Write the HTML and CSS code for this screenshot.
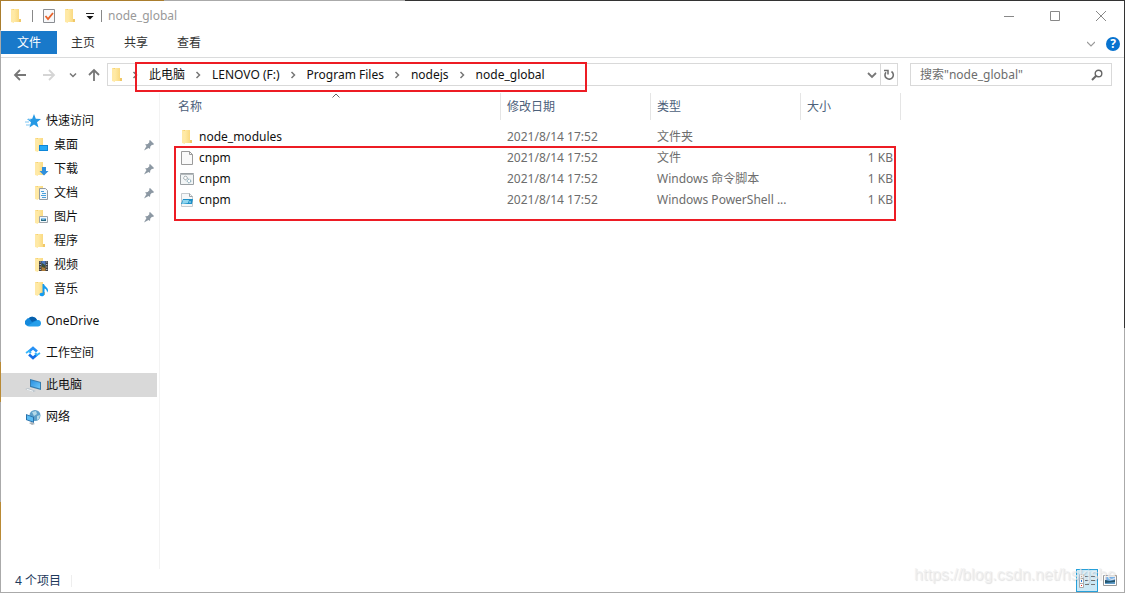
FILE: index.html
```html
<!DOCTYPE html>
<html lang="zh-CN">
<head>
<meta charset="utf-8">
<title>node_global</title>
<link rel="stylesheet" href="styles.css">
</head>
<body>
<svg class="defs" aria-hidden="true">
  <defs>
    <linearGradient id="gold" x1="0" x2="1"><stop offset="0" stop-color="#ffeaa5"/><stop offset="1" stop-color="#f8d374"/></linearGradient>
    <linearGradient id="screen" x1="0" y1="0" x2="1" y2="1"><stop offset="0" stop-color="#2a8fe0"/><stop offset="1" stop-color="#6cc8fb"/></linearGradient>
    <symbol id="folder" viewBox="0 0 16 16"><path d="M2 1h8v10h2v3H2z" fill="#f5cd69"/><path d="M2 1l3 1v13l-3-1z" fill="#ffe9a6"/><path d="M5 1h5v10h2v3H5z" fill="url(#gold)"/><path d="M10 11h2v3h-2z" fill="#f0c868"/></symbol>
    <symbol id="pin" viewBox="0 0 12 12"><path d="M7 1l4 4-1 1-1-.3L7.300 7.500 7 10 5.500 9 1 11.500 3.500 7 2 5.500 4.700 5 6.600 3 6 2z" fill="#8c98a3"/></symbol>
    <symbol id="crumb" viewBox="0 0 6 8"><path d="M1 1l3 3-3 3" fill="none" stroke="#777" stroke-width="1.500"/></symbol>
  </defs>
</svg>
<div class="window">
  <header class="titlebar">
    <svg class="icon"><use href="#folder"/></svg>
    <span class="rule"></span>
    <button class="quick" aria-label="属性"><svg class="icon" viewBox="0 0 16 16"><path d="M2.500 1.500h11v13h-11z" fill="#f7f8fa" stroke="#8a8d92"/><path d="M4.500 8l2.500 3 5-6" fill="none" stroke="#e8622a" stroke-width="1.800"/></svg></button>
    <button class="quick" aria-label="新建文件夹"><svg class="icon"><use href="#folder"/></svg></button>
    <button class="quick" aria-label="自定义快速访问工具栏"><svg class="more" viewBox="0 0 8 8"><path d="M0 1.500h8" stroke="#222" /><path d="M0.500 4h7L4 7.500z" fill="#111"/></svg></button>
    <span class="rule"></span>
    <h1 class="title">node_global</h1>
    <div class="controls">
      <button class="control" aria-label="最小化"><svg class="glyph" viewBox="0 0 10 10"><path d="M0 5.500h10"/></svg></button>
      <button class="control" aria-label="最大化"><svg class="glyph" viewBox="0 0 10 10"><path d="M.5.5h9v9h-9z"/></svg></button>
      <button class="control" aria-label="关闭"><svg class="glyph" viewBox="0 0 10 10"><path d="M0 0l10 10M10 0L0 10"/></svg></button>
    </div>
  </header>
  <nav class="tabs" aria-label="功能区">
    <button class="tab tab-file">文件</button>
    <button class="tab">主页</button>
    <button class="tab">共享</button>
    <button class="tab">查看</button>
    <div class="ribbon-tools">
      <button class="quick" aria-label="展开功能区"><svg class="expand" viewBox="0 0 8 8"><path d="M0 2l4 4 4-4" fill="none" stroke="#999" stroke-width="1.200"/></svg></button>
      <button class="help" aria-label="帮助">?</button>
    </div>
  </nav>
  <div class="toolbar">
    <div class="history">
      <button class="quick" aria-label="后退"><svg class="arrow" viewBox="0 0 14 14"><path d="M13 7H2M7 2L2 7l5 5" stroke="#777"/></svg></button>
      <button class="quick" aria-label="前进"><svg class="arrow" viewBox="0 0 14 14"><path d="M1 7h11M7 2l5 5-5 5" stroke="#d5d5d5"/></svg></button>
      <button class="quick" aria-label="最近浏览的位置"><svg class="recent" viewBox="0 0 8 8"><path d="M1 2.500l3 3 3-3" fill="none" stroke="#777" stroke-width="1.500"/></svg></button>
      <button class="quick" aria-label="上移"><svg class="arrow" viewBox="0 0 14 14"><path d="M7 13V2M2 7l5-5 5 5" stroke="#777"/></svg></button>
    </div>
    <div class="address">
      <svg class="icon"><use href="#folder"/></svg>
      <nav class="crumbs" aria-label="路径">
        <svg class="crumb"><use href="#crumb"/></svg>
        <a href="#">此电脑</a>
        <svg class="crumb"><use href="#crumb"/></svg>
        <a href="#">LENOVO (F:)</a>
        <svg class="crumb"><use href="#crumb"/></svg>
        <a href="#">Program Files</a>
        <svg class="crumb"><use href="#crumb"/></svg>
        <a href="#">nodejs</a>
        <svg class="crumb"><use href="#crumb"/></svg>
        <a href="#">node_global</a>
      </nav>
      <button class="quick drop" aria-label="以前的位置"><svg class="chevron" viewBox="0 0 10 10"><path d="M1 3l4 4 4-4" fill="none" stroke="#777" stroke-width="1.800"/></svg></button>
      <button class="refresh" aria-label="刷新"><svg class="reload" viewBox="0 0 12 12"><path d="M8.500 2.500A4.200 4.200 0 1 1 3 3.200" fill="none" stroke="#6f6f6f" stroke-width="1.600"/><path d="M1 1.500h4v4" fill="none" stroke="#6f6f6f" stroke-width="1.500"/></svg></button>
      <span class="mark mark-path"></span>
    </div>
    <form class="search">
      <input class="search-input" type="search" placeholder="搜索&quot;node_global&quot;" aria-label="搜索node_global">
      <button class="quick" type="button" aria-label="搜索"><svg class="lens" viewBox="0 0 12 12"><circle cx="7.500" cy="4.500" r="3.300" fill="none" stroke="#666" stroke-width="1.400"/><path d="M5 7L1 11" stroke="#666" stroke-width="2"/></svg></button>
    </form>
  </div>
  <div class="content">
    <nav class="sidebar" aria-label="导航窗格">
      <div class="group">
        <a class="place" href="#"><svg class="icon" viewBox="0 0 16 16"><path d="M9 1l1.800 4.700L16 6l-4 3.300 1.500 5.200L9 11.500l-4.500 3L6 9.300 2 6l5.200-.3z" fill="#2599e5"/><path d="M0 9h4M1 12h4M3 6l3 1" stroke="#7cc6f3"/></svg>快速访问</a>
        <a class="place child" href="#"><svg class="icon" viewBox="0 0 16 16"><use href="#folder"/><path d="M6 8h9v6H6z" fill="#0d86d8"/><path d="M7 9h7v4H7z" fill="#27a9f5"/></svg><span class="label">桌面</span><svg class="pin"><use href="#pin"/></svg></a>
        <a class="place child" href="#"><svg class="icon" viewBox="0 0 16 16"><use href="#folder"/><path d="M9 6h4v4h2.500L11 14.500 6.500 10H9z" fill="#2f8fdc"/></svg><span class="label">下载</span><svg class="pin"><use href="#pin"/></svg></a>
        <a class="place child" href="#"><svg class="icon" viewBox="0 0 16 16"><use href="#folder"/><path d="M6.500 3.500h6l2 2v9h-8z" fill="#f4f8fb" stroke="#939ba2"/><path d="M8 6.500h3M9 8.500h4M8 10.500h5M9 12.500h4" stroke="#4ba1dc"/></svg><span class="label">文档</span><svg class="pin"><use href="#pin"/></svg></a>
        <a class="place child" href="#"><svg class="icon" viewBox="0 0 16 16"><use href="#folder"/><path d="M6.500 7.500h8v6h-8z" fill="#f2f8fc" stroke="#9ca4aa"/><path d="M8 9h5v2H8z" fill="#8bc4ed"/><path d="M8 10l2 1 3-1v2H8z" fill="#276981"/></svg><span class="label">图片</span><svg class="pin"><use href="#pin"/></svg></a>
        <a class="place child" href="#"><svg class="icon"><use href="#folder"/></svg><span class="label">程序</span></a>
        <a class="place child" href="#"><svg class="icon" viewBox="0 0 16 16"><use href="#folder"/><path d="M6 4h9v10H6z" fill="#3c3d42"/><path d="M8.500 4h4v5h-4z" fill="#4e79bf"/><path d="M8.500 9h4v5h-4z" fill="#b07d37"/><path d="M9 6l3 2v3l-3-1z" fill="#3c5038"/><path d="M7.200 4.500V14M13.800 4.500V14" stroke="#e3e3e3" stroke-dasharray="1 1.500"/></svg><span class="label">视频</span></a>
        <a class="place child" href="#"><svg class="icon" viewBox="0 0 16 16"><use href="#folder"/><path d="M9.500 3H11c.5 2.500 4.500 3.500 4 7l-1 1.500c.2-2-1-3.500-2.500-4V13c0 3-5 3-5 .6C6.500 12 8.500 11.300 9.500 12z" fill="#159bf0"/></svg><span class="label">音乐</span></a>
      </div>
      <a class="place" href="#"><svg class="icon" viewBox="0 0 16 16"><path d="M1 12a3 3 0 0 1 0-5 4 4 0 0 1 3-2 5 5 0 0 1 8 2 3.500 3.500 0 0 1 2 6H3a3 3 0 0 1-2-1z" fill="#1489dc"/><path d="M4 5a5 5 0 0 1 8 2L7 9z" fill="#075fac"/><path d="M2 13l7-4 4-2c2 0 3 1.500 3 3.500S14.500 13.500 13 13.500H4z" fill="#259eea"/></svg>OneDrive</a>
      <a class="place" href="#"><svg class="icon" viewBox="0 0 16 16"><path d="M4 6.500l4-3.500 4 3.500" fill="none" stroke="#2791f5" stroke-width="2.600"/><path d="M4 9.500l4 3.500 4-3.500" fill="none" stroke="#126fe8" stroke-width="2.600"/><path d="M1 8l3-2 2 2M15 8l-3 2-2-2" fill="none" stroke="#35b5fb" stroke-width="1.800"/></svg>工作空间</a>
      <a class="place selected" href="#" aria-current="page"><svg class="icon" viewBox="0 0 16 16"><path d="M5 2l11 3v8L5 10z" fill="#367bad"/><path d="M6 3.300l9 2.500v5.800L6 9.100z" fill="url(#screen)"/><path d="M0 12l3-1 8 3-3 1z" fill="#b9c4cc"/><path d="M2 12.300l6 2" stroke="#f3f5f6"/></svg>此电脑</a>
      <a class="place" href="#"><svg class="icon" viewBox="0 0 16 16"><circle cx="10" cy="6.500" r="5.500" fill="#5d9fc8"/><path d="M7 3l4-1 1 3-3 2zM12 7l3-1-1 4-2 1z" fill="#b5dae8"/><path d="M1 5l8 3v6L1 11z" fill="#2870aa"/><path d="M2 6.300l6 2.300v4L2 10.400z" fill="#5bbcf3"/><path d="M4 14l3-1 3 2-3 1z" fill="#a8b1b8"/></svg>网络</a>
    </nav>
    <main class="files">
      <table class="list">
        <colgroup><col class="col-name"><col class="col-mid"><col class="col-mid"><col class="col-size"></colgroup>
        <thead>
          <tr><th scope="col" aria-sort="ascending">名称<svg class="sort" viewBox="0 0 8 5"><path d="M.5 4.500L4 1l3.500 3.500" fill="none" stroke="#666"/></svg></th><th scope="col">修改日期</th><th scope="col">类型</th><th scope="col">大小</th></tr>
        </thead>
        <tbody>
          <tr><td><a class="file" href="#"><svg class="icon"><use href="#folder"/></svg>node_modules</a></td><td>2021/8/14 17:52</td><td>文件夹</td><td class="size"></td></tr>
          <tr><td><a class="file" href="#"><svg class="icon" viewBox="0 0 16 16"><path d="M1.500 1.500h8l3 3v10h-11z" fill="#fafafa" stroke="#9b9b9b"/><path d="M9.500 1.500v3h3" fill="none" stroke="#9b9b9b"/></svg>cnpm</a></td><td>2021/8/14 17:52</td><td>文件</td><td class="size">1 KB</td></tr>
          <tr><td><a class="file" href="#"><svg class="icon" viewBox="0 0 16 16"><path d="M.5 2.500h13v11H.5z" fill="#f2f5f6" stroke="#9aa0a4"/><path d="M0 3.500h14" stroke="#b5babd"/><circle cx="5.500" cy="7" r="1.800" fill="#fff" stroke="#87959b" stroke-dasharray="1.500 .6"/><circle cx="9" cy="10" r="1.800" fill="#fff" stroke="#6f98a8" stroke-dasharray="1.500 .6"/></svg>cnpm</a></td><td>2021/8/14 17:52</td><td>Windows 命令脚本</td><td class="size">1 KB</td></tr>
          <tr><td><a class="file" href="#"><svg class="icon" viewBox="0 0 16 16"><path d="M1.500 1.500h8l3 3v10h-11z" fill="#f5f7f8" stroke="#c4cace"/><path d="M9.500 1.500v3h3" fill="none" stroke="#9ca3a8"/><path d="M3 7h10l-1 5H1z" fill="#1c8fc7"/><path d="M3 8h6l-1 3-6 1z" fill="#8fd5ee"/><path d="M9 10h2" stroke="#bfe6f5"/></svg>cnpm</a></td><td>2021/8/14 17:52</td><td>Windows PowerShell ...</td><td class="size">1 KB</td></tr>
        </tbody>
      </table>
      <span class="mark mark-files"></span>
    </main>
  </div>
  <footer class="status">
    <span class="count">4 个项目</span>
    <div class="views">
      <button class="view active" aria-label="详细信息"><svg class="view-details" viewBox="0 0 18 16"><path d="M1.500 1.500h4v13h-4z" fill="#fff" stroke="#aaa"/><path d="M1 5.500h5M1 10.500h5" stroke="#aaa"/><path d="M3 3h1v1H3z" fill="#555"/><path d="M3 7h1v2H3z" fill="#2b7ce0"/><path d="M3 12h1v1H3z" fill="#e22"/><path d="M7 3.500h4M13 3.500h4M7 7.500h4M13 7.500h4M7 11.500h4M13 11.500h4" stroke="#777"/></svg></button>
      <button class="view" aria-label="大图标"><svg class="view-large" viewBox="0 0 14 12"><path d="M.5.5h13v10H.5z" fill="#fff" stroke="#999"/><path d="M2 2h10v4H2z" fill="#7eb8ef"/><path d="M2 5l5 1 5-1v4H2z" fill="#24566e"/><path d="M2 8l10-1v2H2z" fill="#5e9bc8"/></svg></button>
    </div>
    <span class="watermark">https://blog.csdn.net/hskjshe</span>
  </footer>
</div>
</body>
</html>
```
FILE: styles.css
```css
* { box-sizing: border-box; }

body {
  margin: 0;
  font: 12px/20px "Noto Sans", "Noto Sans CJK SC", sans-serif;
  color: #111;
  background: #fff;
}

a { color: inherit; text-decoration: none; }

button {
  margin: 0;
  padding: 0;
  border: 0;
  background: none;
  font: inherit;
  color: inherit;
}

svg { display: block; flex: none; }

.defs { position: absolute; width: 0; height: 0; }
.icon { width: 16px; height: 16px; }
.quick { display: flex; align-items: center; justify-content: center; }

.window {
  display: flex;
  flex-direction: column;
  min-height: 100vh;
  padding: 1px;
  background:
    linear-gradient(to right, #aa7d2d 164px, #aaa 164px 405px, #333 405px) top / 100% 1px no-repeat,
    linear-gradient(#aaa, #aaa) bottom / 100% 1px no-repeat,
    linear-gradient(#aa7d2d 30px, #aaa 30px 362px, #b98a35 362px 402px, #aaa 402px 502px, #b98a35 502px 540px, #aaa 540px) left / 1px 100% no-repeat,
    linear-gradient(#333 328px, #aaa 328px) right / 1px 100% no-repeat,
    #fff;
}

.titlebar {
  display: flex;
  align-items: center;
  height: 30px;
  padding-left: 8px;
  gap: 6px;
}

.titlebar .rule { width: 1px; height: 12px; margin: 0 2px 0 1px; background: #888; }
.titlebar .rule + .title { margin-left: -2px; }
.more { width: 8px; height: 8px; margin-left: 1px; }
.title { margin: 0; font-size: 12px; font-weight: 400; color: #999; }

.controls { display: flex; align-self: stretch; margin-left: auto; }
.control { display: flex; align-items: center; justify-content: center; width: 46px; }
.glyph { width: 10px; height: 10px; fill: none; stroke: #888; }

.tabs {
  display: flex;
  align-items: flex-start;
  gap: 1px;
  height: 27px;
  border-bottom: 1px solid #dadbdc;
}

.tab { height: 23px; padding: 0 14px; color: #333; }
.tab-file { width: 56px; margin-right: -1px; background: #1979ca; color: #fff; }
.ribbon-tools { display: flex; align-items: center; gap: 11px; height: 26px; margin-left: auto; padding-right: 4px; }
.expand { width: 8px; height: 8px; }
.help { width: 14px; height: 14px; border-radius: 50%; background: #0873cf; color: #fff; font-weight: 700; line-height: 14px; }

.toolbar { display: flex; height: 35px; padding: 5px 12px 7px 0; }
.history { display: flex; align-items: center; width: 106px; padding-left: 12px; gap: 15px; }
.history .quick:nth-child(3) { margin: 0 -5px 0 -2px; }
.arrow { width: 14px; height: 14px; fill: none; stroke-width: 1.8; }
.recent { width: 8px; height: 8px; }

.address {
  position: relative;
  display: flex;
  flex: 1;
  align-items: center;
  border: 1px solid #d9d9d9;
  padding-left: 2px;
}

.crumbs { display: flex; flex: 1; align-items: center; gap: 10px; padding-left: 6px; }
.crumb { width: 7px; height: 8px; }
.drop { width: 16px; }
.chevron { width: 10px; height: 10px; }
.refresh { display: flex; align-items: center; justify-content: center; align-self: stretch; width: 17px; border-left: 1px solid #d9d9d9; }
.reload { width: 12px; height: 12px; }

.search {
  display: flex;
  align-items: center;
  width: 202px;
  margin-left: 12px;
  padding: 0 8px 0 9px;
  border: 1px solid #d9d9d9;
}

.search-input { flex: 1; min-width: 0; padding: 0; border: 0; outline: 0; background: none; font: inherit; }
.search-input::placeholder { color: #6d6d6d; opacity: 1; }
.lens { width: 12px; height: 12px; }

.content { display: flex; flex: 1; }

.sidebar {
  display: flex;
  flex-direction: column;
  gap: 8px;
  width: 159px;
  padding: 16px 2px 0 0;
  border-right: 1px solid #f3f3f3;
}

.place { display: flex; align-items: center; gap: 5px; height: 24px; padding-left: 24px; }
.child { padding: 0 2px 0 32px; }
.label { flex: 1; }
.pin { width: 12px; height: 12px; }
.selected { background: #d9d9d9; }

.files { position: relative; flex: 1; padding-left: 11px; }
.list { width: 730px; table-layout: fixed; border-collapse: collapse; }
.col-name { width: 330px; }
.col-mid { width: 150px; }
.col-size { width: 100px; }

.list th {
  position: relative;
  height: 27px;
  padding: 0 6px;
  box-shadow: inset -1px 0 #e5e5e5;
  font-weight: 400;
  text-align: left;
  color: #4c607a;
}

.list th:first-child { padding-left: 7px; }
.list tbody::before { content: ""; display: block; height: 6px; }
.list td { height: 21px; padding: 0 6px; line-height: 21px; color: #6d6d6d; white-space: nowrap; }
.list .size { padding-right: 8px; text-align: right; }
.sort { position: absolute; top: 0; left: calc(50% - 4px); width: 8px; height: 5px; }
.file { display: flex; align-items: center; gap: 3px; padding-left: 3px; color: #111; }

.mark { position: absolute; border: 2px solid #ed1c24; pointer-events: none; }
.mark-path { top: -2px; left: 27px; width: 452px; height: 30px; }
.mark-files { top: 53px; left: 14px; width: 722px; height: 75px; }

.status { position: relative; display: flex; align-items: center; justify-content: space-between; height: 23px; padding: 0 3px 0 14px; }
.count { padding-right: 10px; border-right: 1px solid #eee; line-height: 12px; color: #1e395b; }
.views { display: flex; gap: 1px; }
.view { display: flex; align-items: center; justify-content: center; width: 22px; height: 23px; }
.active { border: 1px solid #26a0da; background: #cbe8f6; }
.view-details { width: 18px; height: 16px; }
.view-large { width: 14px; height: 12px; }

.watermark {
  position: absolute;
  right: 8px;
  bottom: 7px;
  font: 16px/20px "Liberation Sans", sans-serif;
  color: rgba(240, 240, 240, 0.8);
  text-shadow: 1px 1px 1px rgba(0, 0, 0, 0.12);
  pointer-events: none;
}
```
